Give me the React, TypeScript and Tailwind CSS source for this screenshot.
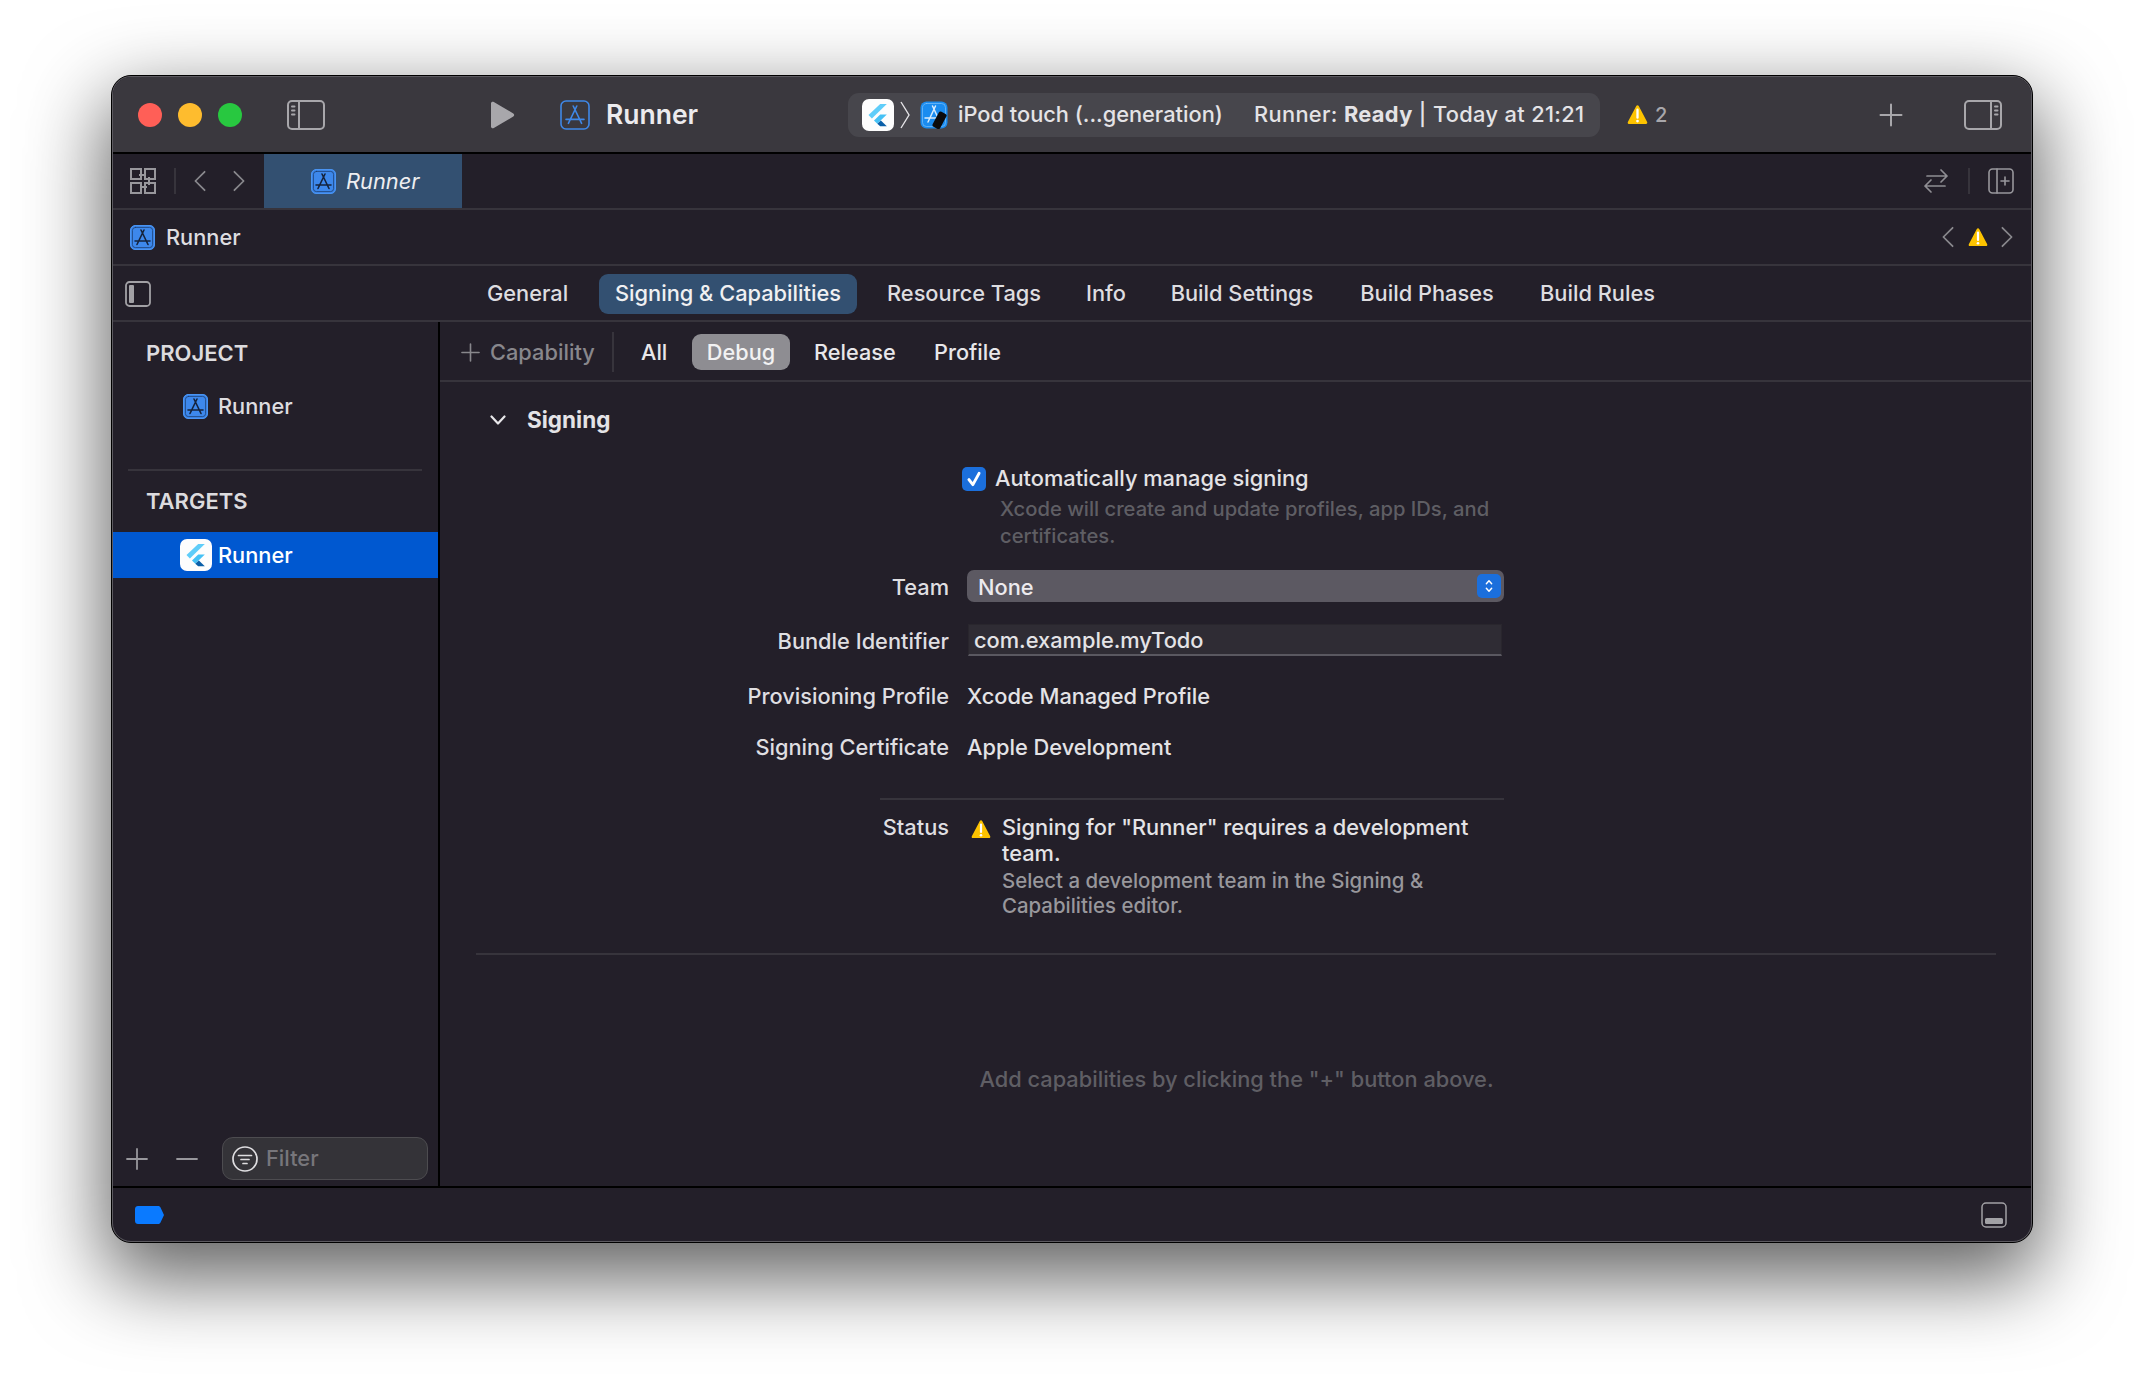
import * as React from 'react'

const BODY = 'font-[family-name:Inter,sans-serif]'

function AppIconOutline() {
  return (
    <svg viewBox="0 0 30 30" className="w-[30px] h-[30px] shrink-0" fill="none" stroke="#3f88e8" strokeWidth="1.6" strokeLinecap="round">
      <rect x="1" y="1" width="28" height="28" rx="5" />
      <path d="M16.8 6 8.4 23.4M13.2 6 21.6 23.4M6 19.4h18" />
    </svg>
  )
}

function AppIconFilled({ size }: { size: string }) {
  return (
    <svg viewBox="0 0 25 25" className={size + ' shrink-0'} fill="none" strokeLinecap="round">
      <rect x="0.5" y="0.5" width="24" height="24" rx="4.5" fill="#3d88ec" stroke="#4a94f2" />
      <rect x="2.4" y="2.4" width="20.2" height="20.2" rx="3" stroke="#1d3f70" strokeWidth="0.8" />
      <path d="M14 5 7 19.5M11 5 18 19.5M5 16h15" stroke="#15233c" strokeWidth="1.6" />
    </svg>
  )
}

function FlutterIcon({ size }: { size: string }) {
  return (
    <svg viewBox="0 0 32 32" className={size + ' shrink-0'}>
      <rect width="32" height="32" rx="7" fill="#fdfdfd" />
      <path d="M18.2 5 6.5 16l3.4 3.5L24.8 5z" fill="#5fcdf9" />
      <path d="M18.2 15.4 12 21.5l3.3 3.3 9.5-9.4z" fill="#45c1f5" />
      <path d="M15.3 24.8l2.9 2.5h6.6l-5.9-5.9z" fill="#0a5fa8" />
    </svg>
  )
}

function XcodeIcon() {
  return (
    <svg viewBox="0 0 28 28" className="w-[28px] h-[28px] shrink-0" fill="none" strokeLinecap="round">
      <rect x="0.5" y="0.5" width="27" height="27" rx="6" fill="#1a8cf0" />
      <rect x="2.5" y="2.5" width="23" height="23" rx="4" stroke="#7cc0fa" strokeWidth="0.7" />
      <path d="M15.5 5 8 21M12.5 5 20 21M5 17h18" stroke="#d8ecfd" strokeWidth="1.5" />
      <rect x="15.5" y="11" width="8.5" height="17" rx="2" transform="rotate(28 20 19)" fill="#0b0b0d" />
    </svg>
  )
}

function Warning({ size }: { size: string }) {
  return (
    <svg viewBox="0 0 20 20" className={size + ' shrink-0'}>
      <path d="M10 1.2c.5 0 .9.3 1.2.8l8 15.2c.4.9-.1 1.8-1.1 1.8H1.9C.9 19.2.4 18.3.8 17.2l8-15.2c.3-.5.7-.8 1.2-.8z" fill="#fdc300" />
      <path d="M10 5.5v7.5" stroke="#fff" strokeWidth="2.2" strokeLinecap="round" />
      <circle cx="10" cy="16.2" r="1.3" fill="#fff" />
    </svg>
  )
}

function Chevron({ dir, className }: { dir: 'left' | 'right'; className: string }) {
  return (
    <svg viewBox="0 0 13 23" className={className} fill="none" stroke="#88878c" strokeWidth="1.9" strokeLinecap="round" strokeLinejoin="round">
      <path d={dir === 'left' ? 'M11.5 1.5 1.5 11.5l10 10' : 'M1.5 1.5l10 10-10 10'} />
    </svg>
  )
}

function SidebarToggle({ flip }: { flip?: boolean }) {
  return (
    <svg viewBox="0 0 38 30" className="w-[38px] h-[30px] shrink-0" fill="none" stroke="#a8a7ab" strokeWidth="2" strokeLinecap="round">
      <rect x="1" y="1" width="36" height="28" rx="4" />
      {flip ? (
        <path d="M27 1v28M31 6.5h2.5M31 10.5h2.5M31 14.5h2.5" />
      ) : (
        <path d="M12 1v28M5 6.5h2.5M5 10.5h2.5M5 14.5h2.5" />
      )}
    </svg>
  )
}

function FieldRow({ label, children, className, labelClass = '' }: { label: string; children: React.ReactNode; className: string; labelClass?: string }) {
  return (
    <div className={'flex h-[32px] items-center ' + className}>
      <div className={'w-[509px] text-right text-[#dfdee1] ' + labelClass}>{label}</div>
      <div className="ml-[18px] flex-1 text-[#e4e3e6]">{children}</div>
    </div>
  )
}

const TABS = [
  { label: 'Resource Tags', w: 'w-[153px]', ml: 'ml-[30px]' },
  { label: 'Info', w: 'w-[38px]', ml: 'ml-[46px]' },
  { label: 'Build Settings', w: 'w-[144px]', ml: 'ml-[46px]' },
  { label: 'Build Phases', w: 'w-[134px]', ml: 'ml-[46px]' },
  { label: 'Build Rules', w: 'w-[115px]', ml: 'ml-[46px]' },
]

function TabsRow() {
  return (
    <div className="box-content flex h-[52px] items-center border-b-2 border-[#37343c] pt-[2px]">
      <div className="ml-[12px] flex h-[26px] w-[26px] items-center">
        <svg viewBox="0 0 26 26" className="w-[26px] h-[26px]" fill="none" stroke="#a2a1a5" strokeWidth="1.8">
          <rect x="1" y="1" width="24" height="24" rx="3.5" />
          <rect x="4" y="4" width="5" height="18" rx="1" fill="#a2a1a5" stroke="none" />
        </svg>
      </div>
      <div className="ml-[336px] flex items-center text-[#dedde0]">
        <span className="w-[80px] pb-[2px] text-center whitespace-nowrap">General</span>
        <span className="ml-[32px] flex h-[40px] w-[258px] items-center justify-center rounded-[9px] bg-[#335071] pb-[2px] text-[#f0f0f2] whitespace-nowrap">
          Signing &amp; Capabilities
        </span>
        {TABS.map((tab) => (
          <span key={tab.label} className={tab.w + ' ' + tab.ml + ' pb-[2px] text-center whitespace-nowrap'}>
            {tab.label}
          </span>
        ))}
      </div>
    </div>
  )
}

export default function App() {
  return (
    <div className={BODY + ' min-h-[1390px] bg-white pl-[111px] pt-[75px] text-[21.8px] font-[450]'}>
      <div className="h-[1168px] w-[1922px] rounded-[20px] border border-black bg-[#231f29] shadow-[0_30px_80px_6px_rgba(0,0,0,0.62)]">
        <div className="flex h-full flex-col overflow-hidden rounded-[19px] border border-[#5c5a60]">
          {/* title bar */}
          <div className="flex h-[75px] shrink-0 items-center bg-[#3a383e]">
            <div className="ml-[25px] flex gap-[16px]">
              <span className="h-[24px] w-[24px] rounded-full bg-[#ff5f57]" />
              <span className="h-[24px] w-[24px] rounded-full bg-[#febc2e]" />
              <span className="h-[24px] w-[24px] rounded-full bg-[#28c840]" />
            </div>
            <div className="ml-[45px]">
              <SidebarToggle />
            </div>
            <svg viewBox="0 0 26 28" className="ml-[164px] h-[28px] w-[26px] shrink-0">
              <path d="M2 2.5v23c0 1.5 1.5 2.2 2.8 1.500l19.500-11.500c1.200-.7 1.200-2.300 0-3L4.800 1C3.500.3 2 1 2 2.500z" fill="#a8a7ab" />
            </svg>
            <div className="ml-[45px]">
              <AppIconOutline />
            </div>
            <span className="ml-[16px] w-[92px] whitespace-nowrap text-[26.5px] font-semibold text-[#ecebee]">Runner</span>
            <div className="ml-[150px] flex h-[44px] w-[752px] items-center rounded-[11px] bg-[#47464c] text-[#e4e3e6]">
              <div className="ml-[14px]">
                <FlutterIcon size="w-[32px] h-[32px]" />
              </div>
              <svg viewBox="0 0 10 28" className="ml-[6px] h-[28px] w-[10px] shrink-0" fill="none" stroke="#e4e3e6" strokeWidth="1.4">
                <path d="M1 1l8 13-8 13" />
              </svg>
              <div className="ml-[10px]">
                <XcodeIcon />
              </div>
              <span className="ml-[10px] w-[264px] whitespace-nowrap">iPod touch (...generation)</span>
              <span className="ml-[32px] whitespace-nowrap tracking-[0.35px]">
                Runner: <span className="font-bold">Ready</span> | Today at 21:21
              </span>
            </div>
            <div className="ml-[27px]">
              <Warning size="w-[21px] h-[21px]" />
            </div>
            <span className="ml-[7px] text-[20px] font-medium text-[#a8a7ab]">2</span>
            <svg viewBox="0 0 24 24" className="ml-[212px] h-[24px] w-[24px] shrink-0" fill="none" stroke="#a8a7ab" strokeWidth="2" strokeLinecap="round">
              <path d="M12 1.5v21M1.5 12h21" />
            </svg>
            <div className="ml-[61px]">
              <SidebarToggle flip />
            </div>
          </div>

          {/* tab bar */}
          <div className="box-content flex h-[54px] shrink-0 items-center border-t-2 border-black">
            <svg viewBox="0 0 26 26" className="ml-[17px] h-[26px] w-[26px] shrink-0" fill="none" stroke="#98979c" strokeWidth="2">
              <path d="M1 1h10v10H1zM15 1h10v10H15zM1 15h10v10H1zM15 15h10v10H15zM9 7h7M19 9v8M10 19h7" />
            </svg>
            <span className="ml-[18px] h-[26px] w-[2px] bg-[#37343c]" />
            <Chevron dir="left" className="ml-[18px] h-[22px] w-[12px] shrink-0" />
            <Chevron dir="right" className="ml-[27px] h-[22px] w-[12px] shrink-0" />
            <div className="ml-[19px] flex h-full w-[198px] items-center bg-[#335071]">
              <div className="ml-[47px]">
                <AppIconFilled size="w-[25px] h-[25px]" />
              </div>
              <span className="ml-[10px] whitespace-nowrap pt-[1px] italic text-[#eeeef0]">Runner</span>
            </div>
            <svg viewBox="0 0 26 26" className="ml-auto h-[26px] w-[26px] shrink-0" fill="none" stroke="#8f8e93" strokeWidth="1.7" strokeLinecap="round" strokeLinejoin="round">
              <path d="M4 8h20M18 2l6 6-6 6M22 18H2M8 12l-6 6 6 6" />
            </svg>
            <span className="ml-[19px] h-[26px] w-[2px] bg-[#37343c]" />
            <svg viewBox="0 0 26 26" className="ml-[18px] mr-[17px] h-[26px] w-[26px] shrink-0" fill="none" stroke="#98979c" strokeWidth="1.6" strokeLinecap="round">
              <rect x="1" y="1" width="24" height="24" rx="3.5" />
              <path d="M9 1v24M17 9v8M13 13h8" />
            </svg>
          </div>

          {/* path bar */}
          <div className="box-content flex h-[54px] shrink-0 items-center border-t-2 border-[#37343c]">
            <div className="ml-[17px]">
              <AppIconFilled size="w-[25px] h-[25px]" />
            </div>
            <span className="ml-[11px] text-[#dedde0]">Runner</span>
            <Chevron dir="left" className="ml-auto h-[22px] w-[12px] shrink-0" />
            <div className="ml-[14px]">
              <Warning size="w-[20px] h-[20px]" />
            </div>
            <Chevron dir="right" className="ml-[13px] mr-[18px] h-[22px] w-[12px] shrink-0" />
          </div>

          <div className="border-t-2 border-[#37343c]">
            <TabsRow />
          </div>

          {/* body */}
          <div className="flex min-h-0 flex-1">
            <div className="flex w-[327px] shrink-0 flex-col border-r-2 border-black">
              <div className="flex h-[60px] items-center pl-[33px] pt-[2px] text-[22px] font-semibold text-[#dcdbde]">PROJECT</div>
              <div className="flex h-[48px] items-center pl-[70px] pt-[1px] text-[#dedde0]">
                <AppIconFilled size="w-[25px] h-[25px]" />
                <span className="ml-[10px]">Runner</span>
              </div>
              <div className="ml-[15px] mr-[16px] mt-[39px] h-[2px] bg-[#37343c]" />
              <div className="flex h-[58px] items-center pl-[33px] pt-[2px] text-[22px] font-semibold text-[#dcdbde]">TARGETS</div>
              <div className="mt-[3px] flex h-[46px] items-center bg-[#0058d0] pl-[67px] text-white">
                <FlutterIcon size="w-[32px] h-[32px]" />
                <span className="ml-[6px]">Runner</span>
              </div>
              <div className="mt-auto flex items-center pb-[6px]">
                <svg viewBox="0 0 22 22" className="ml-[13px] h-[22px] w-[22px] shrink-0" fill="none" stroke="#98979c" strokeWidth="1.8" strokeLinecap="round">
                  <path d="M11 1v20M1 11h20" />
                </svg>
                <svg viewBox="0 0 22 22" className="ml-[28px] h-[22px] w-[22px] shrink-0" fill="none" stroke="#98979c" strokeWidth="1.8" strokeLinecap="round">
                  <path d="M1 11h20" />
                </svg>
                <div className="ml-[24px] flex h-[43px] w-[206px] items-center rounded-[11px] border border-[#4d4c50] bg-[#343338]">
                  <svg viewBox="0 0 26 26" className="ml-[9px] h-[26px] w-[26px] shrink-0" fill="none" stroke="#dedde0" strokeWidth="1.7" strokeLinecap="round">
                    <circle cx="13" cy="13" r="12" />
                    <path d="M6.5 9.5h13M9 13.5h8M11 17.5h4" />
                  </svg>
                  <span className="ml-[8px] text-[#77767b]">Filter</span>
                </div>
              </div>
            </div>

            <div className="flex min-w-0 flex-1 flex-col">
              {/* config row */}
              <div className="box-content flex h-[56px] shrink-0 items-center border-b-2 border-[#37343c] pt-[2px]">
                <svg viewBox="0 0 20 20" className="ml-[21px] h-[19px] w-[19px] shrink-0" fill="none" stroke="#88878c" strokeWidth="1.7" strokeLinecap="round">
                  <path d="M10 1v18M1 10h18" />
                </svg>
                <span className="ml-[10px] w-[103px] whitespace-nowrap text-[#88878c]">Capability</span>
                <span className="ml-[19px] h-[40px] w-[2px] bg-[#37343c]" />
                <span className="ml-[27px] w-[25px] pt-[1px] text-center text-[21.7px] font-medium text-[#e8e7ea]">All</span>
                <span className="ml-[26px] flex h-[36px] w-[98px] items-center justify-center rounded-[9px] bg-[#8e8d92] pt-[1px] text-[21.7px] font-medium text-[#f2f2f3]">Debug</span>
                <span className="ml-[24px] w-[80px] pt-[1px] text-center text-[21.7px] font-medium text-[#e8e7ea]">Release</span>
                <span className="ml-[40px] w-[66px] pt-[1px] text-center text-[21.7px] font-medium text-[#e8e7ea]">Profile</span>
              </div>

              {/* signing section */}
              <div className="flex h-[76px] shrink-0 items-center">
                <svg viewBox="0 0 16 10" className="ml-[50px] h-[10px] w-[16px] shrink-0" fill="none" stroke="#e8e7ea" strokeWidth="2.2" strokeLinecap="round" strokeLinejoin="round">
                  <path d="M1.5 1.5 8 8.5l6.5-7" />
                </svg>
                <span className="ml-[21px] text-[22.5px] font-bold text-[#e4e3e6]">Signing</span>
              </div>

              <div className="pt-[3px]">
                <div className="flex h-[36px] items-center pl-[522px]">
                  <span className="flex h-[24px] w-[24px] items-center justify-center rounded-[5px] bg-[#1b6fdc]">
                    <svg viewBox="0 0 16 16" className="h-[18px] w-[18px]" fill="none" stroke="#fff" strokeWidth="2.6" strokeLinecap="round" strokeLinejoin="round">
                      <path d="M3.5 8.5 7 13l5.5-10" />
                    </svg>
                  </span>
                  <span className="ml-[9px] pb-[1px] text-[#e4e3e6]">Automatically manage signing</span>
                </div>
                <p className="-mt-[1px] ml-[560px] w-[520px] text-[20.2px] leading-[26.5px] text-[#5f5e64]">
                  Xcode will create and update profiles, app IDs, and certificates.
                </p>

                <FieldRow label="Team" className="mt-[21px]" labelClass="pt-[2px]">
                  <div className="flex h-[32px] w-[537px] items-center rounded-[7px] bg-[#5c5962]">
                    <span className="ml-[11px] pt-[2px] text-[#eceaee]">None</span>
                    <span className="ml-auto mr-[3px] flex h-[24px] w-[24px] items-center justify-center rounded-[5px] bg-[#1b6fdc]">
                      <svg viewBox="0 0 10 18" className="h-[16px] w-[10px]" fill="none" stroke="#fff" strokeWidth="1.6" strokeLinecap="round" strokeLinejoin="round">
                        <path d="M2 6.5 5 3l3 3.5M2 11.5 5 15l3-3.5" />
                      </svg>
                    </span>
                  </div>
                </FieldRow>

                <FieldRow label="Bundle Identifier" className="mt-[22px]" labelClass="pt-[2px]">
                  <div className="ml-px flex h-[32px] w-[534px] items-center border border-[#29262d] border-b-2 border-b-[#5a5860] bg-[#2f2c34] pl-[5px] pt-[2px]">
                    com.example.myTodo
                  </div>
                </FieldRow>

                <FieldRow label="Provisioning Profile" className="mt-[24px]">
                  Xcode Managed Profile
                </FieldRow>

                <FieldRow label="Signing Certificate" className="mt-[19px]">
                  Apple Development
                </FieldRow>

                <div className="ml-[440px] mt-[35px] h-[2px] w-[624px] bg-[#37343c]" />

                <div className="mt-[14px] flex leading-[26px]">
                  <div className="w-[509px] text-right text-[#dfdee1]">Status</div>
                  <div className="ml-[22px] mt-[5px]">
                    <Warning size="w-[20px] h-[20px]" />
                  </div>
                  <div className="ml-[11px] w-[500px]">
                    <div className="text-[#e4e3e6]">Signing for "Runner" requires a development team.</div>
                    <div className="mt-[3px] text-[20.4px] leading-[24.5px] text-[#98979c]">
                      Select a development team in the Signing &amp; Capabilities editor.
                    </div>
                  </div>
                </div>

                <div className="ml-[36px] mr-[35px] mt-[35px] h-[2px] bg-[#37343c]" />

                <div className="mt-[109px] pl-[2px] text-center leading-[30px] text-[#5f5e64]">Add capabilities by clicking the "+" button above.</div>
              </div>
            </div>
          </div>

          {/* status bar */}
          <div className="box-content flex h-[53px] shrink-0 items-center border-t-2 border-black">
            <svg viewBox="0 0 29 18" className="ml-[22px] mt-[1px] h-[18px] w-[29px] shrink-0">
              <path d="M3 0h20c1 0 1.8.5 2.4 1.3L29 9l-3.6 7.7c-.6.8-1.400 1.300-2.400 1.300H3c-1.700 0-3-1.300-3-3V3c0-1.700 1.300-3 3-3z" fill="#0a7aff" />
            </svg>
            <svg viewBox="0 0 26 26" className="ml-auto mr-[24px] h-[26px] w-[26px] shrink-0" fill="none" stroke="#a2a1a5" strokeWidth="1.5">
              <rect x="1" y="1" width="24" height="24" rx="4" />
              <rect x="4" y="16" width="18" height="6" rx="1.5" fill="#a2a1a5" stroke="none" />
            </svg>
          </div>
        </div>
      </div>
    </div>
  )
}
